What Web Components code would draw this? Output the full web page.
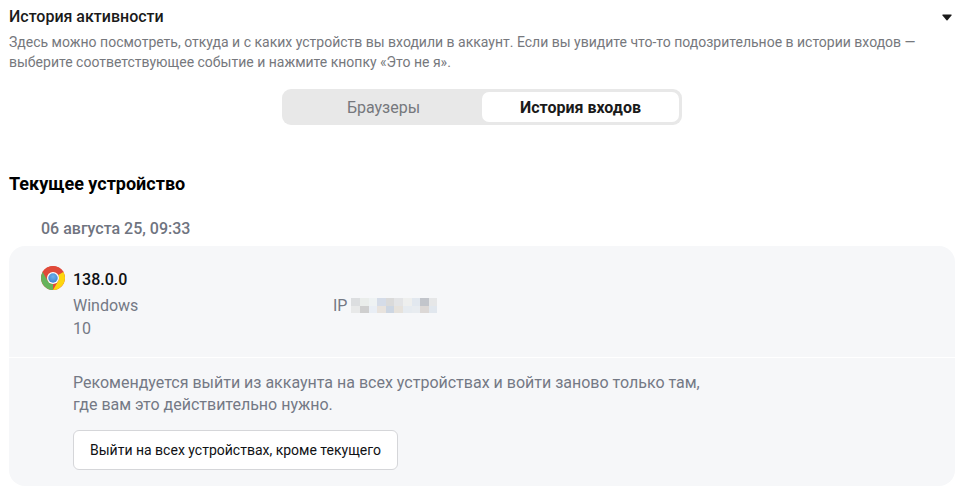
<!DOCTYPE html>
<html lang="ru">
<head>
<meta charset="utf-8">
<style>
  html, body { margin: 0; background: #fff; font-family: Roboto, "Liberation Sans", sans-serif; }
</style>
</head>
<body>
<activity-page></activity-page>
<script>
class ActivityHeader extends HTMLElement {
  constructor() {
    super();
    this.attachShadow({ mode: 'open' });
    this.shadowRoot.innerHTML = `
      <style>
        :host { display: block; }
        .top { display: flex; justify-content: space-between; align-items: center; height: 20px; padding-top: 7px; }
        .title { font-size: 16px; font-weight: 500; color: #1a1a1a; line-height: 20px; }
        svg { display: block; margin-right: 3px; }
        p { margin: 5px 0 0; font-size: 14px; line-height: 20px; color: #76787d; width: 930px; }
      </style>
      <div class="top"><span class="title"><slot name="title"></slot></span>
        <svg width="10" height="7" viewBox="0 0 10 7"><path d="M1 .5h8c.5 0 .8.5.5 1L5.500 6.300c-.3.3-.7.3-1 0L.5 1.500C.2 1 .5.500 1 .5z" fill="#1a1a1a"/></svg>
      </div>
      <p><slot></slot></p>
    `;
  }
}
customElements.define('activity-header', ActivityHeader);

class TabSwitch extends HTMLElement {
  constructor() {
    super();
    this.attachShadow({ mode: 'open' });
    this.shadowRoot.innerHTML = `
      <style>
        :host { display: flex; width: 400px; height: 36px; box-sizing: border-box; padding: 3px; background: #e8e8e8; border-radius: 9px; margin: 0 auto; font-size: 16px; }
        div { flex: 1; display: flex; align-items: center; justify-content: center; border-radius: 7px; }
        .off { color: #76787d; }
        .on { background: #fff; color: #1a1a1a; font-weight: 700; }
      </style>
      <div class="off"><slot name="a"></slot></div>
      <div class="on"><slot name="b"></slot></div>
    `;
  }
}
customElements.define('tab-switch', TabSwitch);

class ChromeIcon extends HTMLElement {
  constructor() {
    super();
    this.attachShadow({ mode: 'open' });
    const sector = 'M3.220 12A24 24 0 0 1 44.780 12H24A12 12 0 0 0 13.600 18z';
    this.shadowRoot.innerHTML = `
      <style>:host { display: block; width: 24px; height: 24px; } svg { display: block; }</style>
      <svg width="24" height="24" viewBox="0 0 48 48">
        <defs>
          <radialGradient id="eye" cx="50%" cy="35%" r="70%">
            <stop offset="0" stop-color="#6fb0e8"/>
            <stop offset="1" stop-color="#3b7fcf"/>
          </radialGradient>
        </defs>
        <circle cx="24" cy="24" r="24" fill="#e04a3a"/>
        <path d="${sector}" fill="#e04a3a"/>
        <path d="${sector}" fill="#fdd60e" transform="rotate(120 24 24)"/>
        <path d="${sector}" fill="#67b35c" transform="rotate(240 24 24)"/>
        <circle cx="24" cy="24" r="12" fill="#fff"/>
        <circle cx="24" cy="24" r="9.500" fill="url(#eye)"/>
      </svg>
    `;
  }
}
customElements.define('chrome-icon', ChromeIcon);

class BlurredIp extends HTMLElement {
  constructor() {
    super();
    this.attachShadow({ mode: 'open' });
    const cols = ['#dcdee0','#eaedeb','#eef2f3','#d5dce8','#dadada','#e3e4e6','#eeefee','#e2e8ef','#c2c5cb','#e6e7e8',
                  '#e8e9e9','#cfcfcf','#e9eef5','#e8e3de','#cdd6e2','#e6e2dc','#e6ebf0','#e8ecf0','#dcd8d6','#e1e7ee'];
    this.shadowRoot.innerHTML = `
      <style>
        :host { display: grid; grid-template-columns: repeat(10, 8.6px); grid-auto-rows: 7.300px; margin-left: 4px; }
      </style>
      ${cols.map(c => `<i style="background:${c}"></i>`).join('')}
    `;
  }
}
customElements.define('blurred-ip', BlurredIp);

class DeviceCard extends HTMLElement {
  constructor() {
    super();
    this.attachShadow({ mode: 'open' });
    this.shadowRoot.innerHTML = `
      <style>
        :host { display: block; background: #f6f7f9; border-radius: 16px; width: 946px; height: 240px; color: #747985; font-size: 16px; line-height: 23px; }
        .info { height: 112px; box-sizing: border-box; padding: 20px 0 0 32px; border-bottom: 1px solid #fff; }
        .ver { display: flex; align-items: center; gap: 8px; height: 24px; color: #0f1114; font-weight: 500; }
        .ver span { padding-top: 2px; }
        .rows { display: flex; padding-left: 32px; margin-top: 4px; }
        .os { width: 260px; }
        .ip { display: flex; align-items: center; height: 23px; }
        .rec { padding: 14px 0 0 64px; }
        .rec p { margin: 0; width: 640px; line-height: 22px; }
        button { display: block; margin-top: 14px; height: 40px; width: 325px; padding: 0; background: #fff; border: 1px solid #d5d6d9; border-radius: 6px; font: 400 14px Roboto, sans-serif; color: #0f1114; }
      </style>
      <div class="info">
        <div class="ver"><chrome-icon></chrome-icon><span>138.0.0</span></div>
        <div class="rows">
          <div class="os">Windows<br>10</div>
          <div class="ip">IP<blurred-ip></blurred-ip></div>
        </div>
      </div>
      <div class="rec">
        <p>Рекомендуется выйти из аккаунта на всех устройствах и войти заново только там, где вам это действительно нужно.</p>
        <button>Выйти на всех устройствах, кроме текущего</button>
      </div>
    `;
  }
}
customElements.define('device-card', DeviceCard);

class ActivityPage extends HTMLElement {
  constructor() {
    super();
    this.attachShadow({ mode: 'open' });
    this.shadowRoot.innerHTML = `
      <style>
        :host { display: block; padding: 0 6px 0 9px; font-family: Roboto, "Liberation Sans", sans-serif; }
        tab-switch { margin-top: 17px; }
        h2 { margin: 47px 0 0; font-size: 18px; line-height: 24px; font-weight: 700; color: #000; }
        .date { margin: 21px 0 0 32px; font-size: 16px; line-height: 24px; font-weight: 500; color: #6f7480; height: 29px; }
      </style>
      <activity-header>
        <span slot="title">История активности</span>
        Здесь можно посмотреть, откуда и с каких устройств вы входили в аккаунт. Если вы увидите что-то подозрительное в истории входов — выберите соответствующее событие и нажмите кнопку «Это не я».
      </activity-header>
      <tab-switch><span slot="a">Браузеры</span><span slot="b">История входов</span></tab-switch>
      <h2>Текущее устройство</h2>
      <div class="date">06 августа 25, 09:33</div>
      <device-card></device-card>
    `;
  }
}
customElements.define('activity-page', ActivityPage);
</script>
</body>
</html>
